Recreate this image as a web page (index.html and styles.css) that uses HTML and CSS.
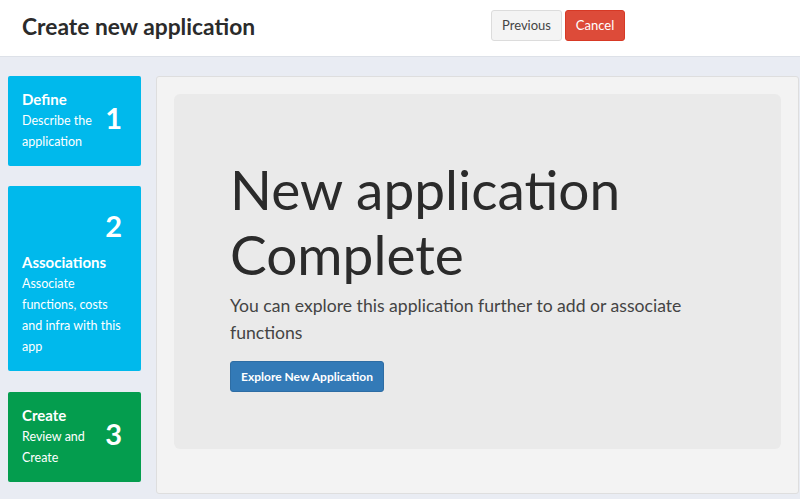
FILE: index.html
```html
<!DOCTYPE html>
<html lang="en">
<head>
<meta charset="utf-8">
<title>Create new application</title>
<link rel="stylesheet" href="styles.css">
</head>
<body>
<header class="topbar">
  <h1 class="page-title">Create new application</h1>
  <div class="actions">
    <button class="btn btn-default btn-prev">Previous</button>
    <button class="btn btn-danger btn-cancel">Cancel</button>
  </div>
</header>
<div class="content">
  <aside class="steps">
    <div class="step step-aqua">
      <div class="step-text">
        <div class="step-title">Define</div>
        <div class="step-desc">Describe the application</div>
      </div>
      <div class="step-num">1</div>
    </div>
    <div class="step step-aqua step-stacked">
      <div class="step-num">2</div>
      <div class="step-text">
        <div class="step-title">Associations</div>
        <div class="step-desc">Associate functions, costs and infra with this app</div>
      </div>
    </div>
    <div class="step step-green">
      <div class="step-text">
        <div class="step-title">Create</div>
        <div class="step-desc">Review and Create</div>
      </div>
      <div class="step-num">3</div>
    </div>
  </aside>
  <main class="panel">
    <section class="jumbotron">
      <h2 class="jumbo-title">New application Complete</h2>
      <p class="jumbo-lead">You can explore this application further to add or associate functions</p>
      <button class="btn btn-primary">Explore New Application</button>
    </section>
  </main>
</div>
</body>
</html>
```

FILE: styles.css
```css
* { box-sizing: border-box; }
html, body { margin: 0; padding: 0; }
body {
  width: 800px;
  height: 499px;
  overflow: hidden;
  background: #e9ecf3;
  font-family: Lato, "Open Sans", sans-serif;
  color: #333;
}
.topbar {
  height: 57px;
  background: #fff;
  border-bottom: 1px solid #dde1e8;
  display: flex;
  align-items: center;
  padding-left: 22px;
}
.page-title {
  margin: 0;
  flex: 0 0 469px;
  font-size: 22.8px;
  font-weight: 700;
  color: #2b2b2b;
  padding-bottom: 4px;
}
.actions {
  display: flex;
  gap: 3px;
  margin-bottom: 6px;
}
.btn {
  font-family: inherit;
  font-size: 13px;
  height: 31px;
  border-radius: 3px;
  border: 1px solid transparent;
  padding: 0;
  cursor: pointer;
}
.btn-default {
  background: #f4f4f4;
  border-color: #dcdcdc;
  color: #444;
}
.btn-prev { width: 71px; }
.btn-danger {
  background: #dd4b39;
  border-color: #d73925;
  color: #fff;
}
.btn-cancel { width: 60px; }
.btn-primary {
  background: #337ab7;
  border-color: #2e6da4;
  color: #fff;
  width: 154px;
  font-weight: 700;
  font-size: 12px;
}
.content {
  display: flex;
  gap: 15px;
  padding: 19px 1px 0 8px;
}
.steps {
  flex: 0 0 133px;
  display: flex;
  flex-direction: column;
  gap: 20px;
}
.step {
  display: flex;
  align-items: center;
  border-radius: 2px;
  color: #fff;
  padding: 13px 19px 14px 14px;
  font-size: 12.5px;
  line-height: 21px;
}
.step-aqua { background: #00b9ec; }
.step-green { background: #049d4e; margin-top: 1px; }
.step-text { flex: 1 1 auto; min-width: 0; }
.step-title { font-weight: 700; font-size: 15px; }
.step-num {
  flex: 0 0 auto;
  font-size: 29px;
  font-weight: 700;
  line-height: 1;
  margin-bottom: 6px;
}
.step-stacked {
  flex-direction: column;
  align-items: stretch;
  padding-right: 12px;
}
.step-stacked .step-num {
  line-height: 54px;
  height: 53px;
  text-align: right;
  padding-right: 7px;
  margin: 0;
}
.panel {
  flex: 1 1 auto;
  height: 418px;
  background: #f3f3f3;
  border: 1px solid #dedede;
  border-radius: 3px;
  padding: 17px;
}
.jumbotron {
  background: #eaeaea;
  border-radius: 6px;
  padding: 48px 56px 57px;
  height: 355px;
}
.jumbo-title {
  margin: 15px 0 0;
  font-size: 55px;
  line-height: 65px;
  font-weight: 400;
  color: #2b2b2b;
}
.jumbo-lead {
  margin: 5px 0 15px;
  font-size: 17.6px;
  line-height: 27px;
  font-weight: 400;
  color: #444;
}
```
